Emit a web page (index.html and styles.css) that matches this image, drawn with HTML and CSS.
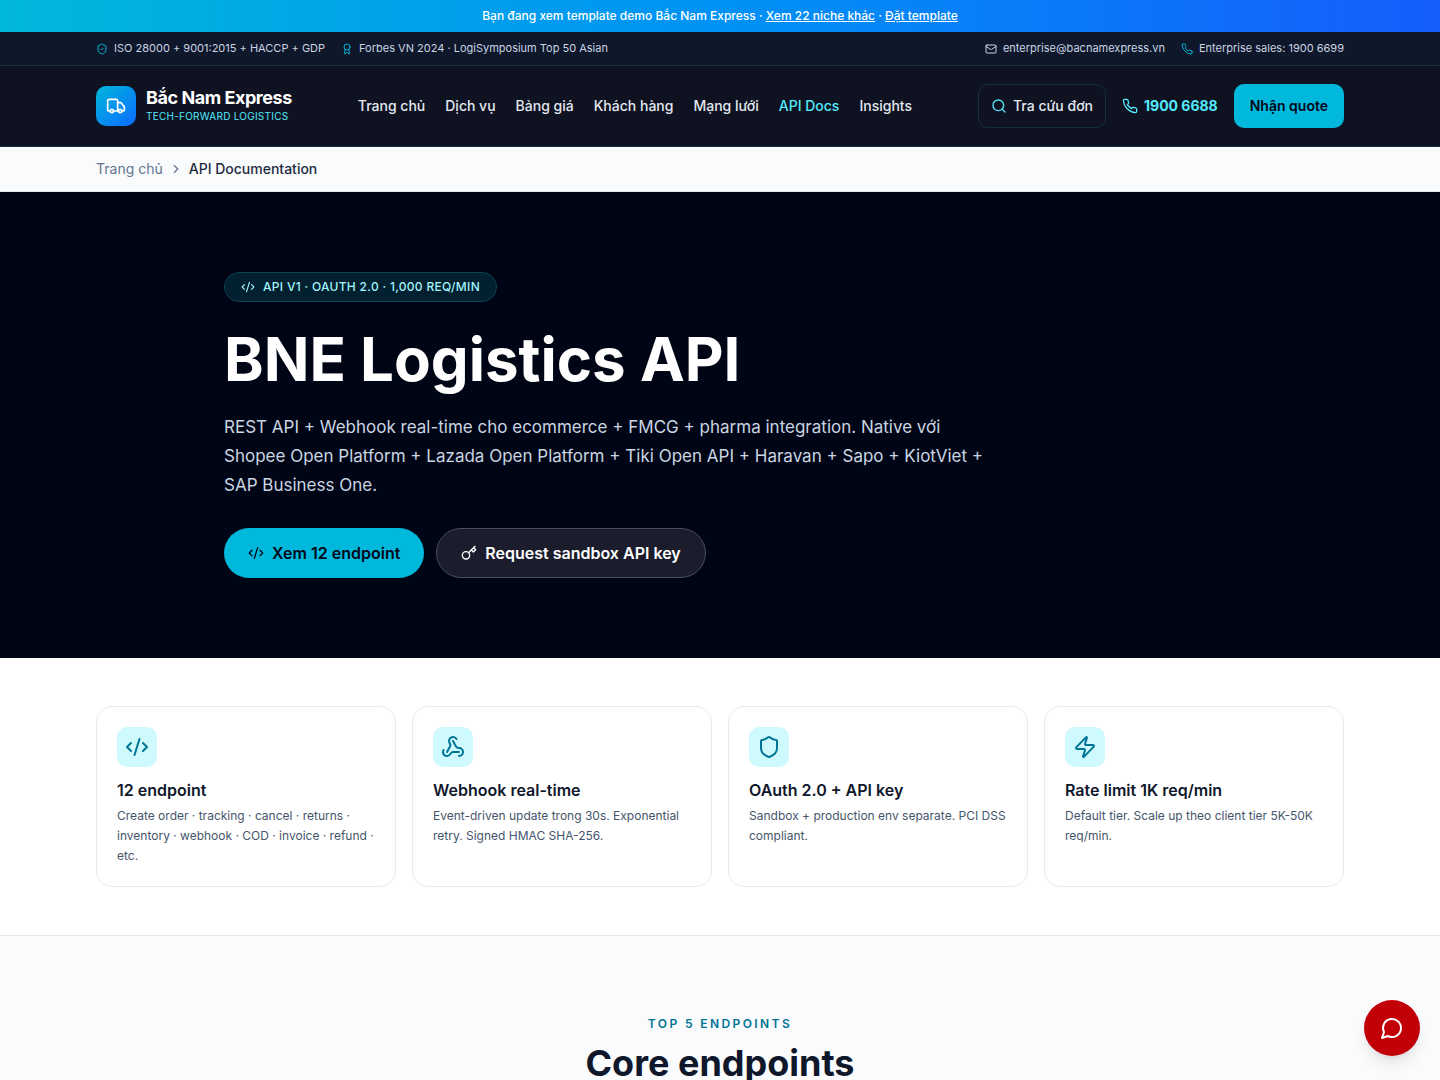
FILE: index.html
```html
<!DOCTYPE html>
<html lang="vi">
<head>
  <meta charset="UTF-8">
  <meta name="viewport" content="width=device-width, initial-scale=1.0">
  <title>API Documentation - Bắc Nam Express</title>
  <link rel="stylesheet" href="styles.css">
</head>
<body>
  <svg class="sprite" aria-hidden="true">
    <symbol id="code" viewBox="0 0 24 24"><path d="m18 16 4-4-4-4"/><path d="m6 8-4 4 4 4"/><path d="m14.5 4-5 16"/></symbol>
    <symbol id="phone" viewBox="0 0 24 24"><path d="M22 16.92v3a2 2 0 0 1-2.18 2 19.79 19.79 0 0 1-8.63-3.07 19.5 19.5 0 0 1-6-6 19.79 19.79 0 0 1-3.07-8.67A2 2 0 0 1 4.11 2h3a2 2 0 0 1 2 1.72 12.84 12.84 0 0 0 .7 2.81 2 2 0 0 1-.45 2.11L8.09 9.91a16 16 0 0 0 6 6l1.27-1.27a2 2 0 0 1 2.11-.45 12.84 12.84 0 0 0 2.81.7A2 2 0 0 1 22 16.92z"/></symbol>
    <symbol id="shield" viewBox="0 0 24 24"><path d="M20 13c0 5-3.5 7.5-7.66 8.95a1 1 0 0 1-.67-.01C7.5 20.5 4 18 4 13V6a1 1 0 0 1 1-1c2 0 4.5-1.2 6.24-2.72a1.17 1.17 0 0 1 1.52 0C14.51 3.81 17 5 19 5a1 1 0 0 1 1 1z"/></symbol>
  </svg>

  <div class="promo">
    <p>Bạn đang xem template demo Bắc Nam Express · <a href="#">Xem 22 niche khác</a> · <a href="#">Đặt template</a></p>
  </div>

  <div class="topbar">
    <div class="container topbar-row">
      <div class="topbar-group">
        <span><svg class="icon cyan" viewBox="0 0 24 24"><use href="#shield"/><path d="m9 12 2 2 4-4"/></svg>ISO 28000 + 9001:2015 + HACCP + GDP</span>
        <span><svg class="icon cyan" viewBox="0 0 24 24"><path d="m15.477 12.89 1.515 8.526a.5.5 0 0 1-.81.47l-3.58-2.687a1 1 0 0 0-1.197 0l-3.586 2.686a.5.5 0 0 1-.81-.469l1.514-8.526"/><circle cx="12" cy="8" r="6"/></svg>Forbes VN 2024 · LogiSymposium Top 50 Asian</span>
      </div>
      <div class="topbar-group">
        <a href="#"><svg class="icon" viewBox="0 0 24 24"><rect x="2" y="4" width="20" height="16" rx="2"/><path d="m22 7-8.97 5.7a1.94 1.94 0 0 1-2.06 0L2 7"/></svg>enterprise@bacnamexpress.vn</a>
        <a href="#"><svg class="icon cyan"><use href="#phone"/></svg>Enterprise sales: 1900 6699</a>
      </div>
    </div>
  </div>

  <header>
    <div class="container header-row">
      <a class="brand" href="#">
        <span class="brand-mark"><svg class="icon" viewBox="0 0 24 24"><path d="M14 18V6a2 2 0 0 0-2-2H4a2 2 0 0 0-2 2v11a1 1 0 0 0 1 1h2"/><path d="M15 18H9"/><path d="M19 18h2a1 1 0 0 0 1-1v-3.65a1 1 0 0 0-.22-.624l-3.48-4.35A1 1 0 0 0 17.52 8H14"/><circle cx="17" cy="18" r="2"/><circle cx="7" cy="18" r="2"/></svg></span>
        <span>
          <span class="brand-name">Bắc Nam Express</span>
          <span class="brand-tag">Tech-forward logistics</span>
        </span>
      </a>
      <nav class="menu">
        <a href="#">Trang chủ</a>
        <a href="#">Dịch vụ</a>
        <a href="#">Bảng giá</a>
        <a href="#">Khách hàng</a>
        <a href="#">Mạng lưới</a>
        <a href="#" class="active">API Docs</a>
        <a href="#">Insights</a>
      </nav>
      <div class="header-actions">
        <a class="track" href="#"><svg class="icon" viewBox="0 0 24 24"><circle cx="11" cy="11" r="8"/><path d="m21 21-4.3-4.3"/></svg>Tra cứu đơn</a>
        <a class="hotline" href="#"><svg class="icon"><use href="#phone"/></svg>1900 6688</a>
        <a class="quote" href="#">Nhận quote</a>
      </div>
    </div>
  </header>

  <nav class="breadcrumb" aria-label="Breadcrumb">
    <div class="container breadcrumb-row">
      <a href="#">Trang chủ</a>
      <svg class="icon" viewBox="0 0 24 24"><path d="m9 18 6-6-6-6"/></svg>
      <span>API Documentation</span>
    </div>
  </nav>

  <main>
    <section class="hero">
      <div class="hero-inner">
        <span class="badge"><svg class="icon"><use href="#code"/></svg>API v1 · OAuth 2.0 · 1,000 req/min</span>
        <h1>BNE Logistics API</h1>
        <p>REST API + Webhook real-time cho ecommerce + FMCG + pharma integration. Native với Shopee Open Platform + Lazada Open Platform + Tiki Open API + Haravan + Sapo + KiotViet + SAP Business One.</p>
        <div class="hero-actions">
          <a class="btn btn-primary" href="#endpoints"><svg class="icon"><use href="#code"/></svg>Xem 12 endpoint</a>
          <a class="btn btn-ghost" href="#"><svg class="icon" viewBox="0 0 24 24"><path d="m21 2-9.6 9.6"/><circle cx="7.5" cy="15.5" r="5.5"/><path d="m15.5 7.5 3 3L22 7l-3-3"/></svg>Request sandbox API key</a>
        </div>
      </div>
    </section>

    <section class="features">
      <div class="container cards">
        <article class="card">
          <div class="card-icon"><svg class="icon"><use href="#code"/></svg></div>
          <h3>12 endpoint</h3>
          <p>Create order · tracking · cancel · returns · inventory · webhook · COD · invoice · refund · etc.</p>
        </article>
        <article class="card">
          <div class="card-icon"><svg class="icon" viewBox="0 0 24 24"><path d="M18 16.98h-5.99c-1.1 0-1.95.94-2.48 1.9A4 4 0 0 1 2 17c.01-.7.2-1.4.57-2"/><path d="m6 17 3.13-5.78c.53-.97.1-2.18-.5-3.1a4 4 0 1 1 6.89-4.06"/><path d="m12 6 3.13 5.73C15.66 12.7 16.9 13 18 13a4 4 0 0 1 0 8"/></svg></div>
          <h3>Webhook real-time</h3>
          <p>Event-driven update trong 30s. Exponential retry. Signed HMAC SHA-256.</p>
        </article>
        <article class="card">
          <div class="card-icon"><svg class="icon"><use href="#shield"/></svg></div>
          <h3>OAuth 2.0 + API key</h3>
          <p>Sandbox + production env separate. PCI DSS compliant.</p>
        </article>
        <article class="card">
          <div class="card-icon"><svg class="icon" viewBox="0 0 24 24"><path d="M4 14a1 1 0 0 1-.78-1.63l9.9-10.2a.5.5 0 0 1 .86.46l-1.92 6.02A1 1 0 0 0 13 10h7a1 1 0 0 1 .78 1.63l-9.9 10.2a.5.5 0 0 1-.86-.46l1.92-6.02A1 1 0 0 0 11 14z"/></svg></div>
          <h3>Rate limit 1K req/min</h3>
          <p>Default tier. Scale up theo client tier 5K-50K req/min.</p>
        </article>
      </div>
    </section>

    <section class="endpoints" id="endpoints">
      <p class="eyebrow">Top 5 endpoints</p>
      <h2>Core endpoints</h2>
    </section>
  </main>

  <button class="chat" type="button" aria-label="Chat"><svg class="icon" viewBox="0 0 24 24"><path d="M7.9 20A9 9 0 1 0 4 16.1L2 22Z"/></svg></button>
</body>
</html>
```
FILE: styles.css
```css
* {
  margin: 0;
  padding: 0;
  box-sizing: border-box;
}
body {
  font-family: Inter, "Liberation Sans", sans-serif;
  font-size: 14px;
  line-height: 20px;
  color: #0f172b;
  background: #fff;
}
a {
  color: inherit;
  text-decoration: none;
}
.sprite {
  display: none;
}
.icon {
  width: 16px;
  height: 16px;
  flex-shrink: 0;
  fill: none;
  stroke: currentColor;
  stroke-width: 2;
  stroke-linecap: round;
  stroke-linejoin: round;
}
.container {
  max-width: 1280px;
  margin: 0 auto;
  padding: 0 16px;
}

/* top strips */
.promo {
  padding: 8px 16px;
  background: linear-gradient(90deg, #00b8db, #0092f5 50%, #155dfc);
  color: #fff;
  font-size: 12px;
  line-height: 16px;
  font-weight: 500;
  text-align: center;
}
.promo a {
  text-decoration: underline;
}
.topbar {
  background: #0f172b;
  border-bottom: 1px solid #1b2b3c;
  color: #cad5e2;
  font-size: 11px;
  line-height: 17px;
}
.topbar-row {
  display: flex;
  justify-content: space-between;
  padding-top: 8px;
  padding-bottom: 8px;
}
.topbar-group {
  display: flex;
  gap: 16px;
}
.topbar-group > * {
  display: flex;
  align-items: center;
  gap: 6px;
}
.topbar .icon {
  width: 12px;
  height: 12px;
}
.topbar .cyan {
  color: #00b8db;
}

/* header */
header {
  background: #0f1221;
  border-bottom: 1px solid #12303f;
}
.header-row {
  min-height: 80px;
  display: flex;
  align-items: center;
  justify-content: space-between;
}
.brand {
  display: flex;
  align-items: center;
  gap: 10px;
}
.brand-mark {
  width: 40px;
  height: 40px;
  display: flex;
  align-items: center;
  justify-content: center;
  border-radius: 10px;
  background: linear-gradient(135deg, #00b8db, #0b6bff);
  color: #fff;
}
.brand-mark .icon {
  width: 20px;
  height: 20px;
}
.brand-name,
.brand-tag {
  display: block;
}
.brand-name {
  color: #fff;
  font-size: 18px;
  font-weight: 700;
  letter-spacing: -0.025em;
}
.brand-tag {
  color: #53eafd;
  font-size: 10px;
  line-height: 16px;
  letter-spacing: 0.025em;
  text-transform: uppercase;
}
.menu {
  display: flex;
  gap: 20px;
  color: #e2e8f0;
  font-weight: 500;
}
.menu .active {
  color: #53eafd;
}
.header-actions {
  display: flex;
  align-items: center;
  gap: 16px;
}
.track,
.hotline,
.quote {
  display: flex;
  align-items: center;
  white-space: nowrap;
}
.track {
  gap: 6px;
  padding: 11px 12px;
  border: 1px solid #11303e;
  border-radius: 10px;
  color: #e2e8f0;
  font-weight: 500;
}
.track .icon {
  color: #53eafd;
}
.hotline {
  gap: 6px;
  color: #53eafd;
  font-weight: 700;
}
.quote {
  padding: 12px 16px;
  border-radius: 10px;
  background: #00b8db;
  color: #020618;
  font-weight: 600;
}

/* breadcrumb */
.breadcrumb {
  background: #f9fbfd;
  border-bottom: 1px solid #e2e8f0;
  color: #62748e;
}
.breadcrumb-row {
  display: flex;
  align-items: center;
  gap: 6px;
  padding-top: 12px;
  padding-bottom: 12px;
}
.breadcrumb .icon {
  width: 14px;
  height: 14px;
}
.breadcrumb span {
  color: #1d293d;
  font-weight: 500;
}

/* hero */
.hero {
  padding: 80px 16px;
  background: #000516;
  color: #fff;
}
.hero-inner {
  max-width: 992px;
  margin: 0 auto;
}
.badge {
  display: inline-flex;
  align-items: center;
  gap: 8px;
  padding: 6px 16px;
  border: 1px solid #0a4356;
  border-radius: 999px;
  background: #02202f;
  color: #a2f4fd;
  font-size: 12px;
  line-height: 16px;
  font-weight: 500;
  letter-spacing: 0.025em;
  text-transform: uppercase;
  vertical-align: top;
}
.badge .icon {
  width: 14px;
  height: 14px;
}
.hero h1 {
  margin-top: 24px;
  font-size: 60px;
  line-height: 66px;
  font-weight: 700;
}
.hero p {
  max-width: 768px;
  margin-top: 21px;
  color: #cad5e2;
  font-size: 17px;
  line-height: 29px;
}
.hero-actions {
  display: flex;
  gap: 12px;
  margin-top: 28px;
}
.btn {
  display: flex;
  align-items: center;
  gap: 8px;
  min-height: 50px;
  padding: 0 24px;
  border-radius: 999px;
  font-size: 16px;
  font-weight: 600;
}
.btn-primary {
  background: #00b8db;
  color: #020618;
}
.btn-ghost {
  border: 1px solid #4b4c5a;
  background: #1b1d2d;
  color: #fff;
}

/* features */
.features {
  padding: 48px 0;
  border-bottom: 1px solid #e2e8f0;
}
.cards {
  display: grid;
  grid-template-columns: repeat(4, 1fr);
  gap: 16px;
}
.card {
  padding: 20px;
  border: 1px solid #e7eaee;
  border-radius: 16px;
}
.card-icon {
  width: 40px;
  height: 40px;
  display: flex;
  align-items: center;
  justify-content: center;
  border-radius: 10px;
  background: #cefafe;
  color: #007595;
}
.card-icon .icon {
  width: 24px;
  height: 24px;
}
.card h3 {
  margin-top: 12px;
  font-size: 16px;
  line-height: 23px;
  font-weight: 600;
}
.card p {
  margin-top: 4px;
  color: #45556c;
  font-size: 12px;
  line-height: 20px;
}

/* endpoints */
.endpoints {
  padding: 80px 16px;
  background: #f9fbfd;
  text-align: center;
}
.eyebrow {
  color: #007595;
  font-size: 12px;
  line-height: 16px;
  font-weight: 600;
  letter-spacing: 0.2em;
  text-transform: uppercase;
}
.endpoints h2 {
  margin-top: 12px;
  font-size: 36px;
  line-height: 38px;
  font-weight: 700;
}

.chat {
  position: fixed;
  right: 20px;
  bottom: 24px;
  width: 56px;
  height: 56px;
  display: flex;
  align-items: center;
  justify-content: center;
  border: none;
  border-radius: 50%;
  background: #c10007;
  color: #fff;
  box-shadow: 0 10px 15px -3px rgba(0,0,0,0.1), 0 4px 6px -4px rgba(0,0,0,0.1);
  cursor: pointer;
}
.chat .icon {
  width: 24px;
  height: 24px;
}
```
